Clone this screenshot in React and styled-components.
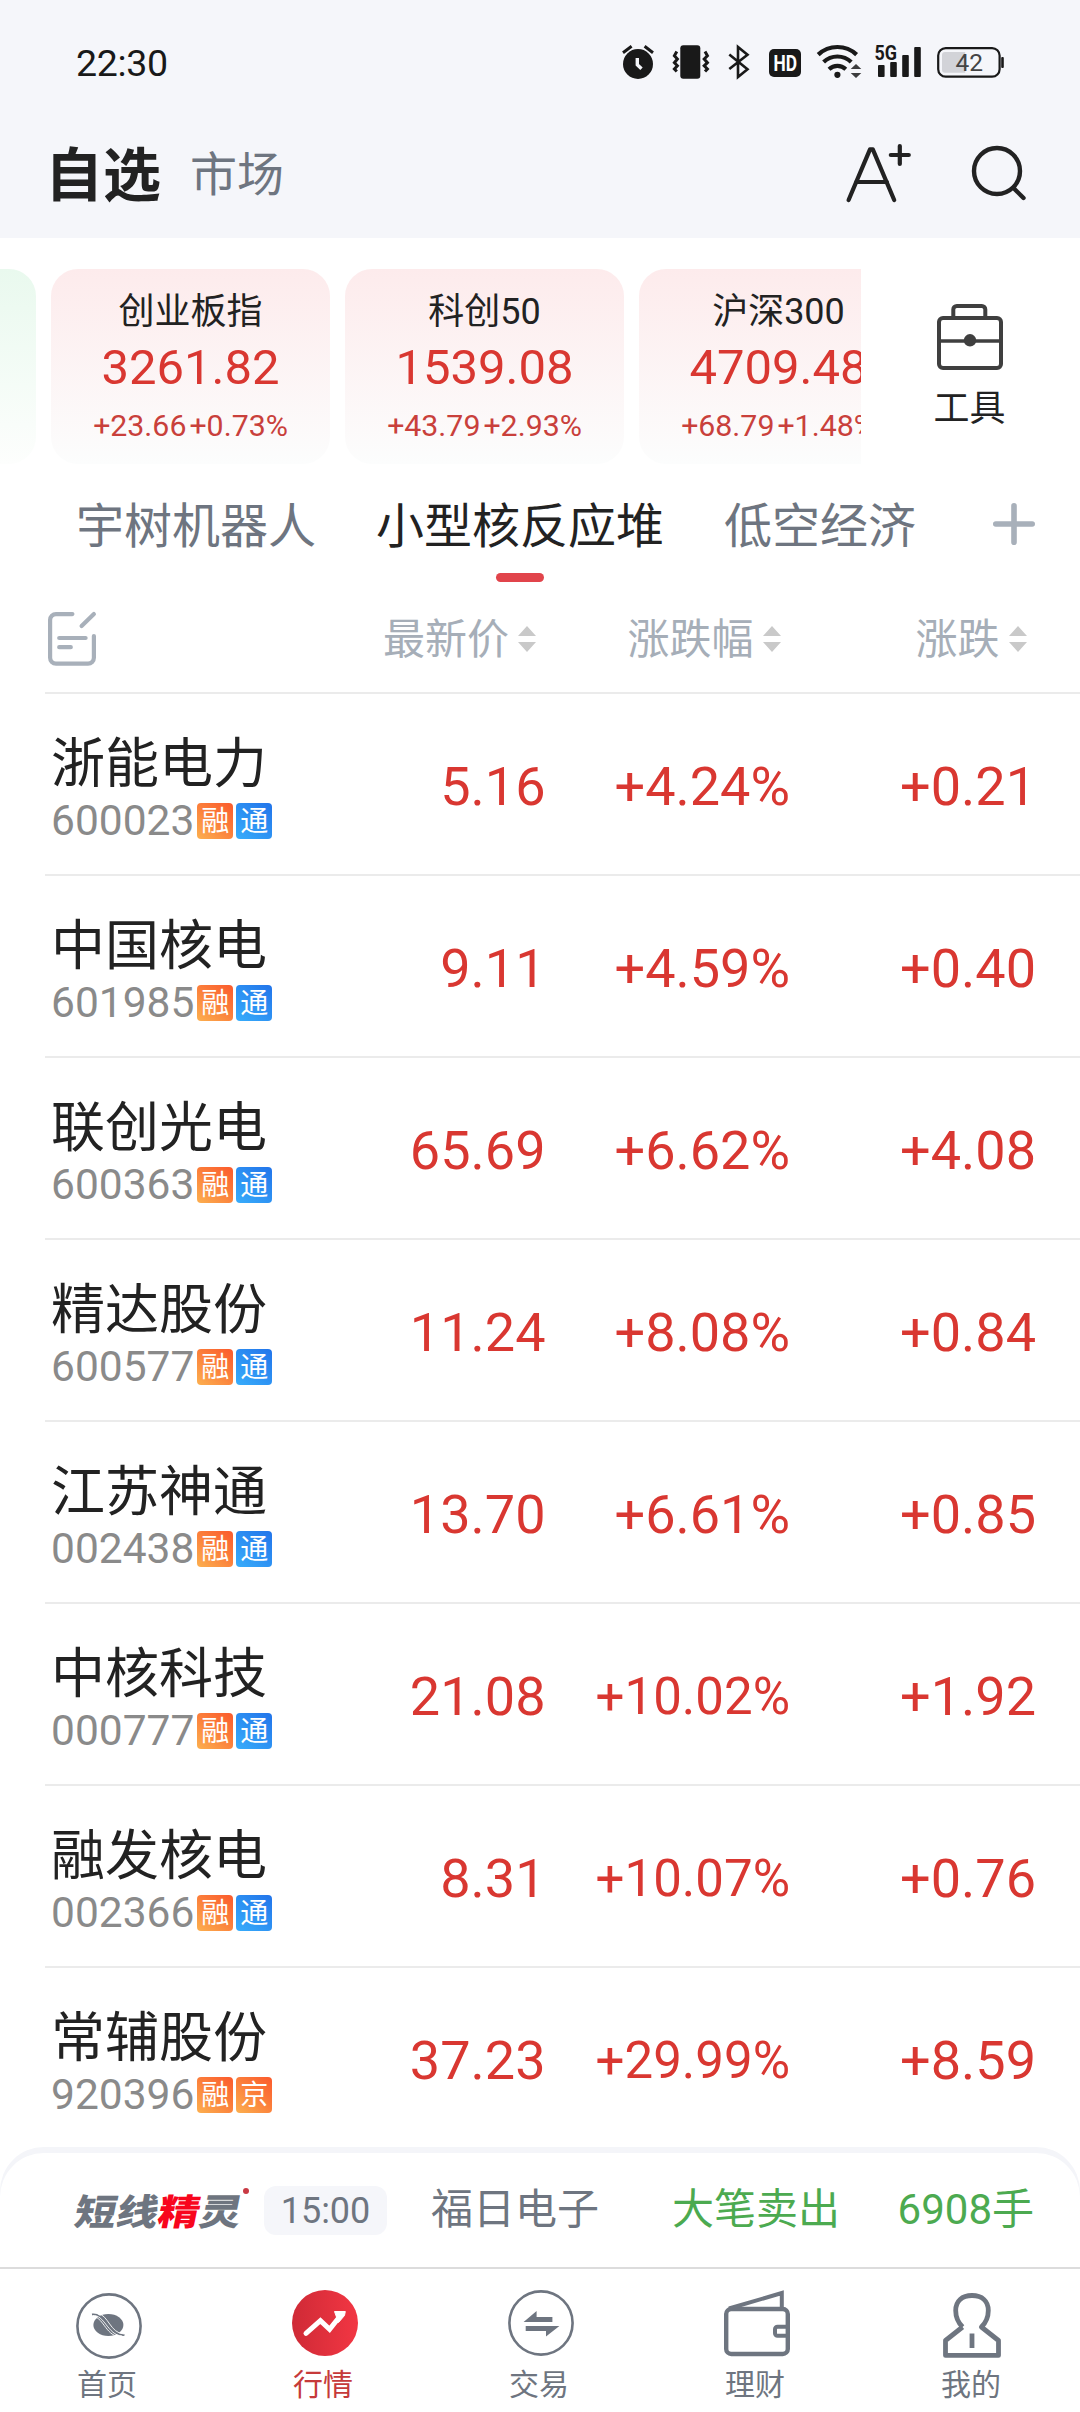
import styled, { createGlobalStyle, css } from 'styled-components'

const GlobalStyle = createGlobalStyle`
  * {
    box-sizing: border-box;
  }
  body {
    margin: 0;
    background: #fff;
    font-family: Roboto, 'Noto Sans CJK SC', sans-serif;
    color: #222;
  }
  svg {
    display: block;
    flex: none;
    overflow: visible;
  }
`

const colors = {
  up: '#d93731',
  down: '#4caa50',
  text: '#222222',
  gray: '#6e7580',
  light: '#a6aeb8',
  bg: '#f5f6fa',
}

const indexes = [
  { name: '创业板指', value: '3261.82', diff: '+23.66', rate: '+0.73%' },
  { name: '科创50', value: '1539.08', diff: '+43.79', rate: '+2.93%' },
  { name: '沪深300', value: '4709.48', diff: '+68.79', rate: '+1.48%' },
]

const groups = ['宇树机器人', '小型核反应堆', '低空经济']

const stocks = [
  { name: '浙能电力', code: '600023', tags: ['融', '通'], price: '5.16', rate: '+4.24%', diff: '+0.21' },
  { name: '中国核电', code: '601985', tags: ['融', '通'], price: '9.11', rate: '+4.59%', diff: '+0.40' },
  { name: '联创光电', code: '600363', tags: ['融', '通'], price: '65.69', rate: '+6.62%', diff: '+4.08' },
  { name: '精达股份', code: '600577', tags: ['融', '通'], price: '11.24', rate: '+8.08%', diff: '+0.84' },
  { name: '江苏神通', code: '002438', tags: ['融', '通'], price: '13.70', rate: '+6.61%', diff: '+0.85' },
  { name: '中核科技', code: '000777', tags: ['融', '通'], price: '21.08', rate: '+10.02%', diff: '+1.92' },
  { name: '融发核电', code: '002366', tags: ['融', '通'], price: '8.31', rate: '+10.07%', diff: '+0.76' },
  { name: '常辅股份', code: '920396', tags: ['融', '京'], price: '37.23', rate: '+29.99%', diff: '+8.59' },
]

const Page = styled.div`
  width: 1080px;
  height: 2412px;
  display: flex;
  flex-direction: column;
  background: #fff;
  overflow: hidden;
`

const Header = styled.header`
  height: 238px;
  flex: none;
  background: ${colors.bg};
`

const StatusBar = styled.div`
  height: 124px;
  display: flex;
  align-items: center;
  justify-content: space-between;
  padding: 0 76px;
`

const Clock = styled.span`
  padding-top: 2px;
  font-size: 37.5px;
  line-height: 40px;
  letter-spacing: -0.3px;
  color: #191919;
`

const StatusIcons = styled.div`
  display: flex;
  gap: 14px;
`

const TitleBar = styled.div`
  height: 102px;
  display: flex;
  align-items: center;
  padding: 0 54px 0 45px;
`

const Title = styled.h1`
  margin: 1px 0 0;
  font-size: 58px;
  line-height: 64px;
  font-weight: 700;
`

const SubTitle = styled.span`
  margin-left: 29px;
  font-size: 47px;
  line-height: 60px;
  color: ${colors.gray};
`

const TitleActions = styled.div`
  margin-left: auto;
  display: flex;
  align-items: center;
  gap: 58px;
`

const IndexBar = styled.section`
  flex: none;
  display: flex;
  padding-top: 31px;
`

const IndexScroller = styled.div`
  width: 861px;
  height: 195px;
  display: flex;
  gap: 15px;
  overflow: hidden;
`

const IndexCard = styled.div`
  flex: none;
  width: 279px;
  height: 195px;
  display: flex;
  flex-direction: column;
  align-items: center;
  padding-top: 21px;
  border-radius: 27px;
  background: linear-gradient(#fdebec, #fcfdfd);
  ${props => props.$falling && css`
    margin-left: -243px;
    background: linear-gradient(#e9f9ee, #fdfefd);
  `}
`

const IndexName = styled.div`
  font-size: 36px;
  line-height: 44px;
`

const IndexValue = styled.div`
  margin-top: 8px;
  font-size: 49px;
  line-height: 52px;
  color: ${colors.up};
`

const IndexChange = styled.div`
  display: flex;
  gap: 3px;
  margin-top: 14px;
  font-size: 30.3px;
  line-height: 36px;
  color: #c9403b;
`

const Tools = styled.div`
  flex: 1;
  display: flex;
  flex-direction: column;
  align-items: center;
  padding: 35px 2px 0 0;
`

const ToolsLabel = styled.span`
  margin-top: 15px;
  font-size: 36px;
  line-height: 46px;
`

const GroupTabs = styled.nav`
  height: 121px;
  flex: none;
  display: flex;
  align-items: flex-start;
  gap: 60px;
  padding: 34px 45px 0 76px;
`

const GroupTab = styled.div`
  display: flex;
  flex-direction: column;
  align-items: center;
  font-size: 48px;
  line-height: 58px;
  white-space: nowrap;
  color: ${props => props.$active ? colors.text : colors.gray};
  &::after {
    content: '';
    width: 48px;
    height: 9px;
    margin-top: 17px;
    border-radius: 5px;
    background: ${props => props.$active ? '#e1444b' : 'transparent'};
  }
`

const AddGroup = styled.div`
  margin: 5px 0 0 auto;
`

const columns = css`
  display: grid;
  grid-template-columns: 246px 248.5px 244.5px 246px;
  margin-left: 45px;
  padding-left: 6px;
`

const TableHead = styled.div`
  ${columns}
  height: 107px;
  flex: none;
  align-items: center;
`

const EditButton = styled.div`
  margin-left: -3px;
`

const HeadCell = styled.div`
  display: flex;
  align-items: center;
  justify-content: flex-end;
  gap: 9px;
  padding-right: 9.5px;
  font-size: 42px;
  line-height: 52px;
  color: ${colors.light};
  span {
    padding-top: 2px;
  }
`

const StockRow = styled.div`
  ${columns}
  flex: none;
  height: 182px;
  border-top: 2px solid #ebebeb;
  &:last-child {
    height: 181px;
  }
`

const StockName = styled.div`
  margin-top: 41px;
  font-size: 54px;
  line-height: 60px;
`

const StockCode = styled.div`
  display: flex;
  align-items: center;
  gap: 3px;
  margin-top: 5px;
  font-size: 42.5px;
  line-height: 42px;
  color: #8a8a8a;
`

const Tag = styled.span`
  width: 36px;
  height: 36px;
  border-radius: 4px;
  font-size: 28px;
  line-height: 37px;
  text-align: center;
  color: #fff;
  background: ${props => props.$blue
    ? 'linear-gradient(40deg, #38adfb, #2274ea)'
    : 'linear-gradient(40deg, #fcb04f, #fb7d3a 55%, #fb5a2c)'};
`

const Figure = styled.div`
  padding-top: 5px;
  display: flex;
  align-items: center;
  justify-content: flex-end;
  font-size: ${props => props.$small ? '51px' : '54px'};
  color: ${colors.up};
`

const TickerWrap = styled.div`
  flex: none;
  height: 120px;
  padding-top: 6px;
  border-radius: 44px 44px 0 0;
  background: #f4f5f9;
`

const Ticker = styled.div`
  height: 114px;
  display: flex;
  align-items: center;
  padding: 0 46px 0 75px;
  border-radius: 44px 44px 0 0;
  background: #fff;
  font-size: 42px;
  line-height: 54px;
  color: ${colors.gray};
`

const TickerLogo = styled.div`
  position: relative;
  width: 189px;
  &::after {
    content: '';
    position: absolute;
    left: 168px;
    top: 4px;
    width: 6px;
    height: 6px;
    border-radius: 50%;
    background: #c93a44;
  }
`

const LogoText = styled.span`
  display: block;
  width: 144px;
  margin-top: -2px;
  font-family: 'Noto Sans CJK SC', sans-serif;
  font-size: 36px;
  font-weight: 900;
  white-space: nowrap;
  transform: scaleX(1.155) skewX(-10deg);
  transform-origin: 0 60%;
  em {
    font-style: normal;
    color: #f8061d;
  }
`

const TimePill = styled.span`
  width: 123px;
  height: 49px;
  border-radius: 12px;
  background: ${colors.bg};
  font-size: 36px;
  line-height: 50px;
  text-align: center;
`

const TickerStock = styled.span`
  margin-left: 44px;
`

const TickerEvent = styled.span`
  margin-left: 73px;
  color: ${colors.down};
`

const TickerVolume = styled.span`
  margin-left: auto;
  color: ${colors.down};
`

const BottomNav = styled.nav`
  flex: none;
  height: 145px;
  display: grid;
  grid-template-columns: repeat(5, 1fr);
  border-top: 2px solid #dcdcdc;
`

const NavItem = styled.div`
  display: flex;
  flex-direction: column;
  align-items: center;
  padding-top: 21px;
  color: ${props => props.$active ? '#c63a3a' : colors.gray};
`

const NavLabel = styled.span`
  margin: 7px 2px 0 0;
  font-size: 30px;
  line-height: 36px;
`

const ink = '#191919'

const AlarmIcon = () => (
  <svg width="36" height="36" viewBox="0 0 36 36" fill="none" stroke={ink} strokeWidth="3">
    <circle cx="16" cy="20" r="15" fill={ink} stroke="none" />
    <path d="M1 8.7 9.6 2.3M22.6 2.3 31 8.7" />
    <path d="M15.3 14v6.8l4.2 4" stroke={colors.bg} strokeWidth="3.4" />
  </svg>
)

const VibrateIcon = () => (
  <svg width="42" height="36" viewBox="0 0 42 36" fill="none" stroke={ink} strokeWidth="3">
    <rect x="8.3" y="1.3" width="20" height="33.4" rx="3" fill={ink} stroke="none" />
    <path d="M4.8 7.6 2.4 11.8 5.4 15 2.4 18.7 5.4 21.8 2.4 25 4.8 27.6" />
    <path d="M33 7.6 35.4 11.8 32.2 15 35.4 18.7 32.2 21.8 35.4 25 33 27.6" />
  </svg>
)

const BluetoothIcon = () => (
  <svg width="27" height="36" viewBox="0 0 27 36" fill="none" stroke={ink} strokeWidth="2.6">
    <path d="M1.3 10.5 19.5 25.3 10 33V3l9.5 7.7L1.3 25" />
  </svg>
)

const HdIcon = () => (
  <svg width="33" height="36" viewBox="0 0 33 36">
    <rect y="5" width="32" height="28" rx="5" fill={ink} />
    <text x="4.5" y="27" fontSize="22.5" fontWeight="700" fill="#fff" textLength="23.5" lengthAdjust="spacingAndGlyphs">HD</text>
  </svg>
)

const WifiIcon = () => (
  <svg width="44" height="36" viewBox="0 0 44 36" fill="none" stroke={ink} strokeWidth="4.2">
    <path d="M2.2 10.6a28 28 0 0 1 38.4 0" />
    <path d="M7.6 18a20 20 0 0 1 27.6 0" />
    <path d="M13 25.2a12.5 12.5 0 0 1 16.8 0" />
    <circle cx="21.4" cy="30.8" r="3.1" fill={ink} stroke="none" />
    <path d="M40 20l5.3 5H34.7zM40 34l5.3-5H34.7z" fill="#3c3c3e" stroke="none" />
  </svg>
)

const SignalIcon = () => (
  <svg width="48" height="36" viewBox="0 0 48 36" fill={ink}>
    <rect x="4" y="21" width="6.6" height="12" rx="1" />
    <rect x="16.2" y="18" width="6.6" height="15" rx="1" />
    <rect x="28.2" y="11" width="6.6" height="22" rx="1" />
    <rect x="40.2" y="3" width="6.6" height="30" rx="1" />
    <text x="0.6" y="15.8" fontSize="21" fontWeight="700" textLength="22.5" lengthAdjust="spacingAndGlyphs">5G</text>
  </svg>
)

const BatteryIcon = () => (
  <svg width="68" height="36" viewBox="0 0 68 36">
    <rect x="2.2" y="4.1" width="61.4" height="28.6" rx="7.5" fill="none" stroke={ink} strokeWidth="2.2" />
    <path d="M9 8H29.2V28.8H9a3 3 0 0 1-3-3V11a3 3 0 0 1 3-3z" fill="#d2d3d8" />
    <rect x="65.2" y="13" width="2.6" height="11" rx="1" fill={ink} />
    <text x="19.4" y="27" fontSize="24.5" fill="#444">42</text>
  </svg>
)

const FontSizeIcon = () => (
  <svg width="67" height="64" viewBox="0 0 67 64" fill="none" stroke={colors.text} strokeWidth="4.2" strokeLinecap="round" strokeLinejoin="round">
    <path d="M3.6 57 25 6.4h2.8L49.2 57M11 39h31" />
    <path d="M54.8 3v18M45.8 12h18" />
  </svg>
)

const SearchIcon = () => (
  <svg width="56" height="62" viewBox="0 0 56 62" fill="none" stroke={colors.text} strokeWidth="4.4" strokeLinecap="round">
    <circle cx="27" cy="27" r="23" />
    <path d="M44 44.5 53.5 54" />
  </svg>
)

const ToolboxIcon = () => (
  <svg width="66" height="67" viewBox="0 0 66 67" fill="none" stroke="#3f3f3f" strokeWidth="4">
    <path d="M16.3 13V5.5a3.5 3.5 0 0 1 3.5-3.5h25a3.5 3.5 0 0 1 3.5 3.5V13" />
    <rect x="2" y="14" width="62" height="50" rx="4" />
    <path d="M2 37h62" strokeWidth="3.6" />
    <circle cx="33" cy="36.3" r="6.2" fill="#3f3f3f" stroke="none" />
  </svg>
)

const PlusIcon = () => (
  <svg width="42" height="42" viewBox="0 0 42 42" fill="none" stroke="#a8b0ba" strokeWidth="5.6" strokeLinecap="round">
    <path d="M21 2.8v36.4M2.8 21h36.4" />
  </svg>
)

const EditIcon = () => (
  <svg width="48" height="54" viewBox="0 0 48 54" fill="none" stroke="#a8b0ba" strokeWidth="4.2" strokeLinecap="round">
    <path d="M24.4 2.1H8a5.9 5.9 0 0 0-5.9 5.9v37.8a5.9 5.9 0 0 0 5.9 5.9h32a5.9 5.9 0 0 0 5.9-5.9V24" />
    <path d="M33.6 14 45.9 2.1M11.2 26h26.4M11.2 35.2h11.6" />
  </svg>
)

const SortIcon = () => (
  <svg width="18" height="26" viewBox="0 0 18 26" fill="#c9c9c9">
    <path d="M9 0l9 10H0zM9 26l9-10H0z" />
  </svg>
)

const HomeIcon = () => (
  <svg width="70" height="70" viewBox="0 0 70 70" fill="none">
    <circle cx="36" cy="36" r="31.6" stroke={colors.gray} strokeWidth="2.6" />
    <ellipse cx="35.4" cy="35" rx="15" ry="11" fill={colors.gray} />
    <path d="M19 24.6c13-2 15 20.6 32.4 20.4" stroke={colors.gray} strokeWidth="2" />
    <g stroke="#fff" strokeWidth="0.9">
      <path d="M19.5 27c10-1.5 13 18 26 19.5" />
      <path d="M19.5 25.6c12-1.5 15 19.5 29.5 20.4" />
      <path d="M25 23.6c10.5 1.5 12 19.5 26 20.4" />
    </g>
  </svg>
)

const MarketIcon = () => (
  <svg width="70" height="70" viewBox="0 0 70 70" fill="none">
    <defs>
      <linearGradient id="market">
        <stop offset="0" stopColor="#cf2a36" />
        <stop offset="1" stopColor="#f23643" />
      </linearGradient>
    </defs>
    <circle cx="36" cy="33" r="33" fill="url(#market)" />
    <path d="M17 43.3 31.4 30.7 40.6 39.4 52 25" stroke="#fff" strokeWidth="5" strokeLinecap="round" />
    <path d="M45.5 21.5h10.8l-.8 4-6 7z" fill="#fff" stroke="#fff" strokeLinejoin="round" />
  </svg>
)

const TradeIcon = () => (
  <svg width="70" height="70" viewBox="0 0 70 70" fill={colors.gray}>
    <circle cx="36" cy="33" r="31.6" fill="none" stroke={colors.gray} strokeWidth="2.6" />
    <path d="M18.6 32 31.6 21v6h15.8v5zM54.4 36 41 46.5V41H20.7v-5z" />
  </svg>
)

const WalletIcon = () => (
  <svg width="70" height="70" viewBox="0 0 70 70" fill="none" stroke={colors.gray} strokeWidth="4.4">
    <rect x="5.2" y="19" width="61.6" height="45" rx="5" />
    <path d="M8 18.5 60.8 3V18" strokeWidth="4" />
    <path d="M66 36.8H56.5a2.500 2.500 0 0 0-2.5 2.5v4a2.5 2.5 0 0 0 2.5 2.5H66" strokeWidth="4" />
  </svg>
)

const PersonIcon = () => (
  <svg width="70" height="70" viewBox="0 0 70 70" fill="none" stroke={colors.gray} strokeWidth="4.8" strokeLinejoin="round">
    <path d="M25.6 37C21.5 33 18.7 28 18.7 20.5 18.7 11 25 5.500 35 5.500S51.3 11 51.3 20.5C51.3 28 48.5 33 44.4 37L61.5 50.5V65.4H8.5V50.5L25.6 37" />
    <path d="M35 43.5V58" />
  </svg>
)

const navItems = [
  { label: '首页', Icon: HomeIcon },
  { label: '行情', Icon: MarketIcon, active: true },
  { label: '交易', Icon: TradeIcon },
  { label: '理财', Icon: WalletIcon },
  { label: '我的', Icon: PersonIcon },
]

const Stock = ({ stock }) => (
  <StockRow>
    <div>
      <StockName>{stock.name}</StockName>
      <StockCode>
        {stock.code}
        {stock.tags.map(tag => <Tag key={tag} $blue={tag === '通'}>{tag}</Tag>)}
      </StockCode>
    </div>
    <Figure>{stock.price}</Figure>
    {/* two-digit percentages get a slightly smaller size to fit the column */}
    <Figure $small={stock.rate.length > 6}>{stock.rate}</Figure>
    <Figure>{stock.diff}</Figure>
  </StockRow>
)

export default function App() {
  return (
    <Page>
      <GlobalStyle />
      <Header>
        <StatusBar>
          <Clock>22:30</Clock>
          <StatusIcons>
            <AlarmIcon />
            <VibrateIcon />
            <BluetoothIcon />
            <HdIcon />
            <WifiIcon />
            <SignalIcon />
            <BatteryIcon />
          </StatusIcons>
        </StatusBar>
        <TitleBar>
          <Title>自选</Title>
          <SubTitle>市场</SubTitle>
          <TitleActions>
            <FontSizeIcon />
            <SearchIcon />
          </TitleActions>
        </TitleBar>
      </Header>

      <IndexBar>
        <IndexScroller>
          <IndexCard $falling />
          {indexes.map(item => (
            <IndexCard key={item.name}>
              <IndexName>{item.name}</IndexName>
              <IndexValue>{item.value}</IndexValue>
              <IndexChange>
                <span>{item.diff}</span>
                <span>{item.rate}</span>
              </IndexChange>
            </IndexCard>
          ))}
        </IndexScroller>
        <Tools>
          <ToolboxIcon />
          <ToolsLabel>工具</ToolsLabel>
        </Tools>
      </IndexBar>

      <GroupTabs>
        {groups.map((group, index) => (
          <GroupTab key={group} $active={index === 1}>{group}</GroupTab>
        ))}
        <AddGroup><PlusIcon /></AddGroup>
      </GroupTabs>

      <TableHead>
        <EditButton><EditIcon /></EditButton>
        {['最新价', '涨跌幅', '涨跌'].map(label => (
          <HeadCell key={label}><span>{label}</span><SortIcon /></HeadCell>
        ))}
      </TableHead>
      <div>
        {stocks.map(stock => <Stock key={stock.code} stock={stock} />)}
      </div>

      <TickerWrap>
        <Ticker>
          <TickerLogo>
            <LogoText>短线<em>精</em>灵</LogoText>
          </TickerLogo>
          <TimePill>15:00</TimePill>
          <TickerStock>福日电子</TickerStock>
          <TickerEvent>大笔卖出</TickerEvent>
          <TickerVolume>6908手</TickerVolume>
        </Ticker>
      </TickerWrap>

      <BottomNav>
        {navItems.map(({ label, Icon, active }) => (
          <NavItem key={label} $active={active}>
            <Icon />
            <NavLabel>{label}</NavLabel>
          </NavItem>
        ))}
      </BottomNav>
    </Page>
  )
}
